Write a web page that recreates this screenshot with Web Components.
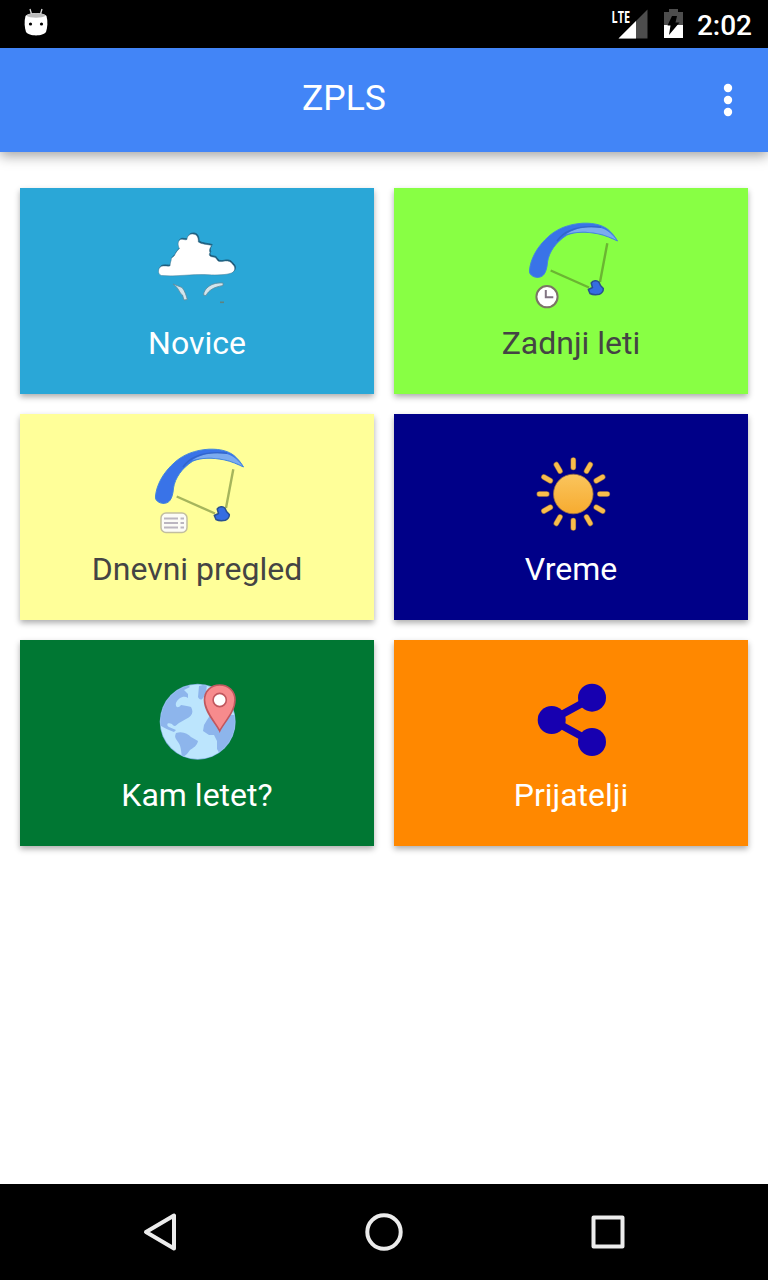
<!DOCTYPE html>
<html lang="sl">
<head>
<meta charset="utf-8">
<title>ZPLS</title>
<style>
    html, body{
        margin: 0;
        height: 100%;
    }
    body{
        background: white;
        font-family: Roboto, "Liberation Sans", sans-serif;
    }
</style>
</head>
<body>
<zpls-app></zpls-app>
<script>
const glider = `
    <path d="M6.500 52C7.500 42 13 29 27 17.200C35 10.500 46 6 60 5.200C72 4.800 80 7.500 85 11.500C89 15 92 18.500 94.500 23C89 20.500 83 17.500 75 15.800C63 13.500 52 13.500 43.700 17.200C33 24 26 34 24.500 44C24 50 23 54 20.500 57C17.500 60 13 60 10 58.300C7 56.500 6.200 55 6.500 52Z" fill="#3973e8" stroke="#4287dc" stroke-width="1"/>
    <path d="M43 16.500C52 9.500 67 7.500 78 10C86 12.500 90 17.500 93.500 22C87 19 81 16.200 74 15.200C62 13 52 13 43 16.500Z" fill="#7babef"/>
    <path d="M34 23C41 13 55 7 78 9.300" fill="none" stroke="#2f5fc0" stroke-width="1.600" stroke-opacity=".7"/>
    <path d="M27.700 52.500L66 69.500M84.300 25.300L77 64" fill="none" stroke="#4d6b20" stroke-opacity=".5" stroke-width="2.400"/>
    <path d="M65.300 71.500L69.500 69.500L68.200 65C70 62.500 74 62 76 64.200L77.500 67.500L80.300 70.500C80.500 73 78.500 75.500 76.300 76.300C73 77 69.500 76.800 67 75.500Z" fill="#356de2" stroke="#29508f" stroke-width="1.500" stroke-linejoin="round"/>
`
const rays = Array.from({length: 12}, (_, i) => `<path d="M50.300 23.500v-7.500" transform="rotate(${i * 30} 50.300 50)"/>`).join('')
const puff = 'M12.500 57.500C8.500 56.500 8.500 50 12.500 48.300C15.500 47.300 18 48.500 21 48C21 46 21.500 44 22.200 42C21.500 40 24.500 39 25.500 37.500C26.500 34.500 28.500 32.500 30.500 30.500C28.500 27.500 28.500 23 31.500 21.500C34 20.700 36 22.500 38 21.500C38 18 40.500 16 43.700 16C47.500 16 49.500 19 49.300 24C53 26.500 57.500 26 62.500 27.500C61 30 59.800 32 61 34.500C59.500 37 60.500 38.500 64 39C67.500 39 67.500 42 69.500 43.300C73 44.300 75.500 42.500 78.500 43C81.500 43.300 82.500 45 84 46.800C86.500 49 86.500 53.500 82.500 55C77 57 68 57.200 59 56.700C42 55.700 28 59 12.500 57.500Z'

const icons = {
    cloud: `
        <path d="${puff}" transform="translate(.7 -1)" fill="#174b69" stroke="#1d6587" stroke-width="1"/>
        <path d="${puff}" fill="#fff" stroke="#3b7894" stroke-width=".5"/>
        <path d="M24 66L33 69.500C36 73 37 77 38.300 81.500L35 82L33.500 77C30 75 31 71 24 66ZM74 65C63 64 55 70 54.500 77L57 77.500C60 72 65 69 74 67.500Z" fill="#d3e5ec" stroke="#628a9b" stroke-width=".8"/>
        <path d="M71 84.300h4" stroke="#5e8380" stroke-width="1.600"/>
    `,
    clock: glider + `
        <circle cx="24" cy="78.700" r="10.600" fill="#fff" stroke="#7b7466" stroke-width="2"/>
        <path d="M22.800 72v7.300h7.500" fill="none" stroke="#817482" stroke-width="2"/>
    `,
    list: glider + `
        <rect x="12" y="69" width="26" height="19.500" rx="5" fill="#fcfcf6" stroke="#c2bea0" stroke-width="1.500"/>
        <path d="M15 74.500h14M15 79h14M15 83.500h14M31.500 74.500h3.500M31.500 79h3.500M31.500 83.500h3.500" stroke="#bbb6c0" stroke-width="1.800"/>
    `,
    sun: `
        <defs>
            <linearGradient id="warm" gradientUnits="userSpaceOnUse" x1="50" y1="13" x2="50" y2="87">
                <stop offset="0" stop-color="#fcd071"/><stop offset="1" stop-color="#f5a01c"/>
            </linearGradient>
        </defs>
        <g fill="none" stroke="#8c6545" stroke-width="5.600" stroke-linecap="round">${rays}</g>
        <g fill="none" stroke="#f9bd4c" stroke-width="4.400" stroke-linecap="round">${rays}</g>
        <circle cx="50.300" cy="50" r="19.800" fill="url(#warm)" stroke="#9b7145" stroke-width=".8"/>
    `,
    globe: `
        <defs><clipPath id="disc"><circle cx="48.700" cy="51.700" r="37.300"/></clipPath></defs>
        <circle cx="48.700" cy="51.700" r="38" fill="#7caedb"/>
        <g clip-path="url(#disc)">
            <rect x="10" y="12" width="78" height="80" fill="#bce5fd"/>
            <path d="M9 54V20L36 12L41 17L35 20L39 24L39 28C35 25 29 28 27 33C26 37 29 39 32 35C36 36 40 36 42 37C45 43 43 46 37 49L30 53C27 55 26 58 23 54C18 52 17 55 20 57L27 60L25 62C19 60 14 57 9 54ZM50 16L58 14L57 23L54 28C52 31 50 29 49 27ZM27 63C34 61 39 64 42 67L49 71C48 76 44 78 41 80L38 84L33 88C32 80 32 76 29 72C25 67 26 66 27 63ZM62 44L58 50L55 55L54 61L60 65L65 65L68 71L68 79L72 86L89 72V45Z" fill="#8db5ec"/>
        </g>
        <path d="M70.700 61C67 53 55.500 42 55.500 30C55.500 21 62 15 70.700 15S86 21 86 30C86 42 74.500 53 70.700 61Z" fill="#f78b8d" stroke="#c0575e" stroke-width="1.600"/>
        <circle cx="70.700" cy="30" r="6.600" fill="#fff" stroke="#c0575e" stroke-width="1.600"/>
    `,
    share: `
        <path d="M69 28L28.700 50L69 72" fill="none" stroke="#1700b0" stroke-width="7.500"/>
        <g fill="#1700b0"><circle cx="28.700" cy="50" r="14"/><circle cx="69" cy="27.700" r="14"/><circle cx="69" cy="72" r="14"/></g>
    `
}

class StatusBar extends HTMLElement{
    constructor(){
        super()
        this.attachShadow({mode: 'open'})
        this.shadowRoot.innerHTML = `
            <style>
                :host{
                    display: flex;
                    align-items: center;
                    box-sizing: border-box;
                    height: 48px;
                    padding: 0 16px 0 20px;
                    background: black;
                    color: white;
                }
                svg{
                    display: block;
                }
                .signal{
                    margin-left: auto;
                }
                .battery{
                    margin: 0 14px 0 16px;
                }
                .lte{
                    font: 700 16.500px "Open Sans", Roboto, sans-serif;
                }
                time{
                    font-size: 28px;
                    font-weight: 500;
                    line-height: 46px;
                    padding-top: 4px;
                }
            </style>
            <svg width="32" height="48" viewBox="20 0 32 48">
                <path d="M30 9l1.500 5M42 9l-1.500 5" stroke="#ddd" stroke-width="1.300"/>
                <path d="M25.500 16C29 12 43 12 46.500 16C48 22 47.500 27 46 32C43 36.500 29 36.500 26 32C24.500 27 24 22 25.500 16Z" fill="#fff"/>
                <path d="M26 15.500C30 12 42 12 46 15.500C42 18.500 30 18.500 26 15.500Z" fill="#bbb"/>
                <circle cx="30.500" cy="24" r="1.600"/><circle cx="41.500" cy="24" r="1.600"/>
            </svg>
            <svg class="signal" width="37" height="48" viewBox="611 0 37 48">
                <path d="M647.500 9.500V38.500H618.500Z" fill="#4d4d4d"/>
                <path d="M636 21V38.500H618.500Z" fill="#fff"/>
                <text class="lte" x="611.500" y="22.700" fill="#fff" textLength="18.500" lengthAdjust="spacingAndGlyphs">LTE</text>
            </svg>
            <svg class="battery" width="19" height="48" viewBox="664 0 19 48">
                <path d="M669 9h9v3h5v14h-19V12h5Z" fill="#4d4d4d"/>
                <path d="M664 25h19v13h-19Z" fill="#fff"/>
                <path d="M672 16h5l-1.500 6.500h4L669 35l1.500-9.500h-3Z"/>
            </svg>
            <time>2:02</time>
        `
    }
}

class AppToolbar extends HTMLElement{
    constructor(){
        super()
        this.attachShadow({mode: 'open'})
        this.shadowRoot.innerHTML = `
            <style>
                :host{
                    display: flex;
                    align-items: center;
                    height: 104px;
                    background: #4285f7;
                    color: white;
                    box-shadow: 0 4px 12px rgba(0,0,0,.36);
                }
                h1{
                    flex: 1;
                    margin: 0;
                    padding-bottom: 4px;
                    text-align: center;
                    font-size: 35.500px;
                    font-weight: 400;
                    line-height: 42px;
                }
                svg{
                    display: block;
                }
            </style>
            <h1><slot></slot></h1>
            <svg width="80" height="104" fill="#fff">
                <circle cx="40" cy="40" r="4.200"/><circle cx="40" cy="52" r="4.200"/><circle cx="40" cy="64" r="4.200"/>
            </svg>
        `
    }
}

class MenuTile extends HTMLElement{
    constructor(){
        super()
        this.attachShadow({mode: 'open'})
        this.shadowRoot.innerHTML = `
            <style>
                :host{
                    display: flex;
                    flex-direction: column;
                    align-items: center;
                    box-sizing: border-box;
                    height: 206px;
                    padding-top: 30px;
                    background: var(--tile);
                    color: var(--label, white);
                    box-shadow: 0 3px 6px rgba(0,0,0,.32);
                }
                svg{
                    display: block;
                    overflow: visible;
                }
                span{
                    font-size: 32px;
                    line-height: 38px;
                    margin-top: 10px;
                }
            </style>
            <svg width="96" height="96" viewBox="0 0 96 96"></svg>
            <span><slot></slot></span>
        `
    }
    connectedCallback(){
        this.shadowRoot.querySelector('svg').innerHTML = icons[this.getAttribute('icon')]
    }
}

class NavBar extends HTMLElement{
    constructor(){
        super()
        this.attachShadow({mode: 'open'})
        this.shadowRoot.innerHTML = `
            <style>
                :host{
                    display: flex;
                    justify-content: center;
                    gap: 128px;
                    height: 96px;
                    background: black;
                }
                svg{
                    fill: none;
                    stroke: #ececec;
                    stroke-width: 4;
                    stroke-linejoin: round;
                }
            </style>
            <svg width="96" height="96"><path d="M62 31.500v33L34 48Z"/></svg>
            <svg width="96" height="96"><circle cx="48" cy="48" r="16.700"/></svg>
            <svg width="96" height="96"><rect x="33.500" y="33.500" width="29" height="29"/></svg>
        `
    }
}

class ZplsApp extends HTMLElement{
    constructor(){
        super()
        this.attachShadow({mode: 'open'})
        this.shadowRoot.innerHTML = `
            <style>
                :host{
                    display: flex;
                    flex-direction: column;
                    height: 100vh;
                }
                main{
                    flex: 1;
                    display: grid;
                    grid-template-columns: 1fr 1fr;
                    align-content: start;
                    gap: 20px;
                    padding: 36px 20px;
                }
            </style>
            <status-bar></status-bar>
            <app-toolbar>ZPLS</app-toolbar>
            <main>
                <menu-tile icon="cloud" style="--tile: #2aa7d7">Novice</menu-tile>
                <menu-tile icon="clock" style="--tile: #88ff44; --label: #444">Zadnji leti</menu-tile>
                <menu-tile icon="list" style="--tile: #ffff99; --label: #444">Dnevni pregled</menu-tile>
                <menu-tile icon="sun" style="--tile: #000088">Vreme</menu-tile>
                <menu-tile icon="globe" style="--tile: #007733">Kam letet?</menu-tile>
                <menu-tile icon="share" style="--tile: #ff8800">Prijatelji</menu-tile>
            </main>
            <nav-bar></nav-bar>
        `
    }
}

customElements.define('status-bar', StatusBar)
customElements.define('app-toolbar', AppToolbar)
customElements.define('menu-tile', MenuTile)
customElements.define('nav-bar', NavBar)
customElements.define('zpls-app', ZplsApp)
</script>
</body>
</html>
